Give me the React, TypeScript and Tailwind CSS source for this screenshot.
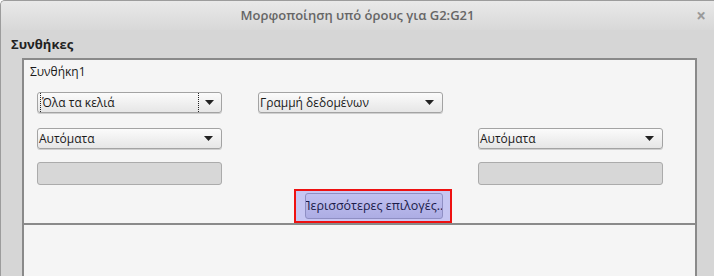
import React from "react";

const font = { fontFamily: '"Open Sans", "Noto Sans", sans-serif' };

function Arrow() {
  return (
    <svg width="9" height="5" viewBox="0 0 9 5" className="shrink-0">
      <path d="M0 0 H9 L4.5 5 Z" fill="#222" />
    </svg>
  );
}

function Dropdown({ label, focused }: { label: string; focused?: boolean }) {
  return (
    <div className="flex h-[21px] w-[185px] items-stretch rounded-[3px] border border-[#a3a3a3] bg-gradient-to-b from-[#fbfbfb] to-[#e6e6e6] text-[12px] leading-[19px] text-[#1a1a1a] shadow-[0_1px_0_#cfcfcf]">
      {focused ? (
        <>
          <span className="ml-[2px] w-[159px] shrink-0 overflow-hidden whitespace-nowrap border-x border-dotted border-[#222] pl-[1px]">
            {label}
          </span>
          <span className="flex flex-1 items-center justify-center pr-[1px]">
            <Arrow />
          </span>
        </>
      ) : (
        <>
          <span className="flex-1 overflow-hidden whitespace-nowrap pl-[1px]">{label}</span>
          <span className="flex w-[26px] shrink-0 items-center justify-center">
            <Arrow />
          </span>
        </>
      )}
    </div>
  );
}

function Field() {
  return <div className="h-[23px] w-[185px] rounded-[3px] border border-[#ababab] bg-[#d7d7d7]" />;
}

export default function App() {
  return (
    <div
      className="flex h-[276px] w-[714px] flex-col overflow-hidden rounded-tl-[5px] border-l border-t border-[#9c9c9c] bg-[#d6d6d6]"
      style={font}
    >
      {/* Title bar */}
      <div className="grid h-[29px] shrink-0 grid-cols-[40px_1fr_40px] items-center bg-gradient-to-b from-[#e9e9e9] to-[#d8d8d8]">
        <div />
        <div className="text-center text-[13px] font-semibold text-[#666]">
          Μορφοποίηση υπό όρους για G2:G21
        </div>
        <div className="flex justify-end pr-[8px] text-[17px] font-bold leading-none text-[#9a9a9a]">×</div>
      </div>

      {/* Section header */}
      <div className="h-[28px] shrink-0 pl-[10px] pt-[5px] text-[13px] font-bold leading-[18px] text-[#222]">
        Συνθήκες
      </div>

      {/* Condition list */}
      <div className="ml-[21px] flex w-[675px] flex-1 flex-col border-2 border-b-0 border-[#8a8a8a] bg-[#f5f5f5]">
        <div className="flex h-[165px] shrink-0 flex-col border-b-2 border-[#8a8a8a]">
          <div className="pl-[6px] pt-[3px] text-[12px] leading-[18px] text-[#1a1a1a]">Συνθήκη1</div>

          <div className="ml-[13px] mt-[11px] flex gap-[36px]">
            <Dropdown label="Όλα τα κελιά" focused />
            <Dropdown label="Γραμμή δεδομένων" />
          </div>

          <div className="ml-[13px] mr-[32px] mt-[15px] flex justify-between">
            <Dropdown label="Αυτόματα" />
            <Dropdown label="Αυτόματα" />
          </div>

          <div className="ml-[13px] mr-[32px] mt-[13px] flex justify-between">
            <Field />
            <Field />
          </div>

          <div className="ml-[270px] mt-[4px] flex h-[34px] w-[158px] items-center border-2 border-[#ee1111] bg-[#c6c6f2] pl-[9px] pr-[7px]">
            <div className="flex h-[26px] w-full justify-center overflow-hidden whitespace-nowrap rounded-[3px] border border-[#8f8fc4] bg-gradient-to-b from-[#c0c0f0] to-[#adade4] text-[12.5px] leading-[24px] text-[#1c1c4a]">
              <span>Περισσότερες επιλογές...</span>
            </div>
          </div>
        </div>
        <div className="flex-1" />
      </div>
    </div>
  );
}
